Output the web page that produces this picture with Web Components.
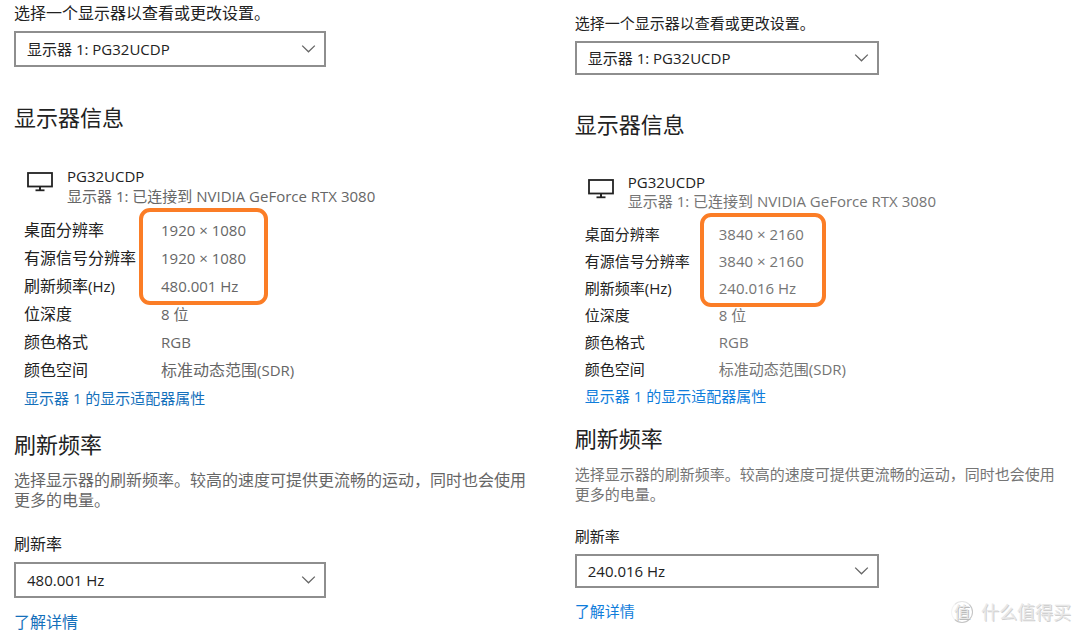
<!DOCTYPE html>
<html lang="zh-CN">
<head>
<meta charset="utf-8">
<title>高级显示设置</title>
<style>
	body {
		margin: 0;
		background: #fff;
		color: #222;
		font-family: "Open Sans", "Noto Sans CJK SC", sans-serif;
	}
</style>
</head>
<body>
<compare-page>
	<display-panel class="wide" name="PG32UCDP" resolution="1920 × 1080" rate="480.001 Hz"></display-panel>
	<display-panel class="narrow" name="PG32UCDP" resolution="3840 × 2160" rate="240.016 Hz"></display-panel>
	<site-mark slot="mark" badge="值">什么值得买</site-mark>
</compare-page>

<script>
class ComparePage extends HTMLElement {
	constructor() {
		super();
		this.attachShadow({ mode: "open" }).innerHTML = `
      <style>
        :host {
          display: block;
          position: relative;
          min-height: 100vh;
        }
        .columns {
          display: grid;
          grid-template-columns: 1.08fr 1fr;
          align-items: start;
        }
        ::slotted(.wide) {
          --text: 16px;
          --line: 20px;
          --row: 28px;
          --top: 3px;
          --field-width: 312px;
          --field-height: 36px;
          --section-gap: 36px;
          --device-gap: 35px;
          --block-gap: 18px;
          --note-gap: 24px;
          --key-width: 137px;
          --mark-width: 129px;
          --mark-left: 125px;
          --link: #1470bb;
          --muted: #666;
        }
        ::slotted(.narrow) {
          --text: 15px;
          --line: 19px;
          --row: 27px;
          --top: 14px;
          --field-width: 304px;
          --field-height: 34px;
          --section-gap: 35px;
          --device-gap: 35px;
          --block-gap: 14px;
          --note-gap: 23px;
          --key-width: 134px;
          --mark-width: 126px;
          --mark-left: 125px;
          --link: #0f7ddb;
          --muted: #757575;
        }
        ::slotted(site-mark) {
          position: absolute;
          right: 9px;
          bottom: 10px;
        }
      </style>
      <main class="columns"><slot></slot></main>
      <slot name="mark"></slot>
    `;
	}
}

class SelectField extends HTMLElement {
	connectedCallback() {
		if (this.shadowRoot) return;
		this.attachShadow({ mode: "open" }).innerHTML = `
      <style>
        :host {
          display: flex;
          flex-direction: column;
          gap: 8px;
        }
        label {
          line-height: var(--line);
        }
        .box {
          display: grid;
          align-items: center;
          width: var(--field-width);
          max-width: 100%;
        }
        select, svg {
          grid-area: 1 / 1;
        }
        select {
          appearance: none;
          box-sizing: border-box;
          width: 100%;
          height: var(--field-height);
          margin: 0;
          padding: 0 36px 0 11px;
          border: 2px solid #8e8e8e;
          border-radius: 0;
          background: #fff;
          color: #222;
          font-family: inherit;
          font-size: 15px;
        }
        svg {
          justify-self: end;
          margin-right: 10px;
          pointer-events: none;
        }
      </style>
      <label for="field">${this.getAttribute("label")}</label>
      <div class="box">
        <select id="field"><option>${this.getAttribute("value")}</option></select>
        <svg width="15" height="10" viewBox="0 0 15 10" fill="none" stroke="#666" stroke-width="1.3">
          <path d="M1.2 1.6 7.5 7.8 13.8 1.6"/>
        </svg>
      </div>
    `;
	}
}

class DisplayPanel extends HTMLElement {
	connectedCallback() {
		if (this.shadowRoot) return;
		const name = this.getAttribute("name");
		const resolution = this.getAttribute("resolution");
		const rate = this.getAttribute("rate");
		this.attachShadow({ mode: "open" }).innerHTML = `
      <style>
        :host {
          display: block;
          padding: var(--top) 22px 0 14px;
          font-size: var(--text);
          line-height: var(--line);
        }
        h2 {
          margin: var(--section-gap) 0 0;
          font-size: 22px;
          font-weight: 400;
          line-height: 28px;
        }
        .device {
          display: flex;
          gap: 14px;
          margin-top: var(--device-gap);
          padding-left: 13px;
          font-size: 15px;
        }
        .device svg {
          flex: none;
          margin-top: 6px;
        }
        .device p {
          margin: 0;
        }
        .latin {
          font-size: 15px;
        }
        .status, .note, dd {
          color: var(--muted);
        }
        .info {
          position: relative;
          margin-top: 10px;
        }
        dl {
          display: grid;
          grid-template-columns: var(--key-width) 1fr;
          grid-auto-rows: var(--row);
          align-items: center;
          margin: 0;
          padding-left: 10px;
        }
        dd {
          margin: 0;
        }
        /* frame around the first three values */
        .mark {
          position: absolute;
          top: -8px;
          left: var(--mark-left);
          box-sizing: border-box;
          width: var(--mark-width);
          height: calc(var(--row) * 3 + 13px);
          border: 4px solid #fb7d26;
          border-radius: 11px;
          pointer-events: none;
        }
        a {
          color: var(--link);
          text-decoration: none;
        }
        .adapter {
          display: block;
          padding-left: 10px;
          font-size: 15px;
          line-height: var(--row);
        }
        .rate-title {
          margin-top: var(--block-gap);
        }
        .note {
          margin: 12px 0 var(--note-gap);
          line-height: 20px;
        }
        .more {
          display: inline-block;
          margin-top: 14px;
        }
      </style>
      <select-field label="选择一个显示器以查看或更改设置。" value="显示器 1: ${name}"></select-field>
      <h2>显示器信息</h2>
      <div class="device">
        <svg width="26" height="20" viewBox="0 0 26 20" fill="none" stroke="#222">
          <rect x="1" y="1" width="24" height="13.5" stroke-width="1.8"/>
          <path d="M13 14.5V18" stroke-width="2"/>
          <path d="M8.5 18.3H17.5" stroke-width="1.8"/>
        </svg>
        <div>
          <p>${name}</p>
          <p class="status">显示器 1: 已连接到 NVIDIA GeForce RTX 3080</p>
        </div>
      </div>
      <div class="info">
        <dl>
          <dt>桌面分辨率</dt><dd class="latin">${resolution}</dd>
          <dt>有源信号分辨率</dt><dd class="latin">${resolution}</dd>
          <dt>刷新频率<span class="latin">(Hz)</span></dt><dd class="latin">${rate}</dd>
          <dt>位深度</dt><dd class="latin">8 位</dd>
          <dt>颜色格式</dt><dd class="latin">RGB</dd>
          <dt>颜色空间</dt><dd>标准动态范围<span class="latin">(SDR)</span></dd>
        </dl>
        <div class="mark"></div>
      </div>
      <a class="adapter" href="#adapter">显示器 1 的显示适配器属性</a>
      <h2 class="rate-title">刷新频率</h2>
      <p class="note">选择显示器的刷新频率。较高的速度可提供更流畅的运动，同时也会使用更多的电量。</p>
      <select-field label="刷新率" value="${rate}"></select-field>
      <a class="more" href="#more">了解详情</a>
    `;
	}
}

class SiteMark extends HTMLElement {
	constructor() {
		super();
		this.attachShadow({ mode: "open" }).innerHTML = `
      <style>
        :host {
          display: flex;
          align-items: center;
          gap: 8px;
          color: #e8e8e8;
          font-size: 18px;
          line-height: 24px;
          text-shadow: 1px 1px 0 #d0d0d0;
        }
        .badge {
          display: grid;
          place-items: center;
          box-sizing: border-box;
          width: 22px;
          height: 22px;
          border: 1px solid #c4c4c4;
          border-top-color: #e4e4e4;
          border-left-color: #f4f4f4;
          border-radius: 50%;
          font-size: 16px;
          line-height: 20px;
          text-shadow: 1px 1px 0 #bbb;
        }
      </style>
      <span class="badge">${this.getAttribute("badge") || ""}</span>
      <slot></slot>
    `;
	}
}

customElements.define("select-field", SelectField);
customElements.define("display-panel", DisplayPanel);
customElements.define("site-mark", SiteMark);
customElements.define("compare-page", ComparePage);
</script>
</body>
</html>
